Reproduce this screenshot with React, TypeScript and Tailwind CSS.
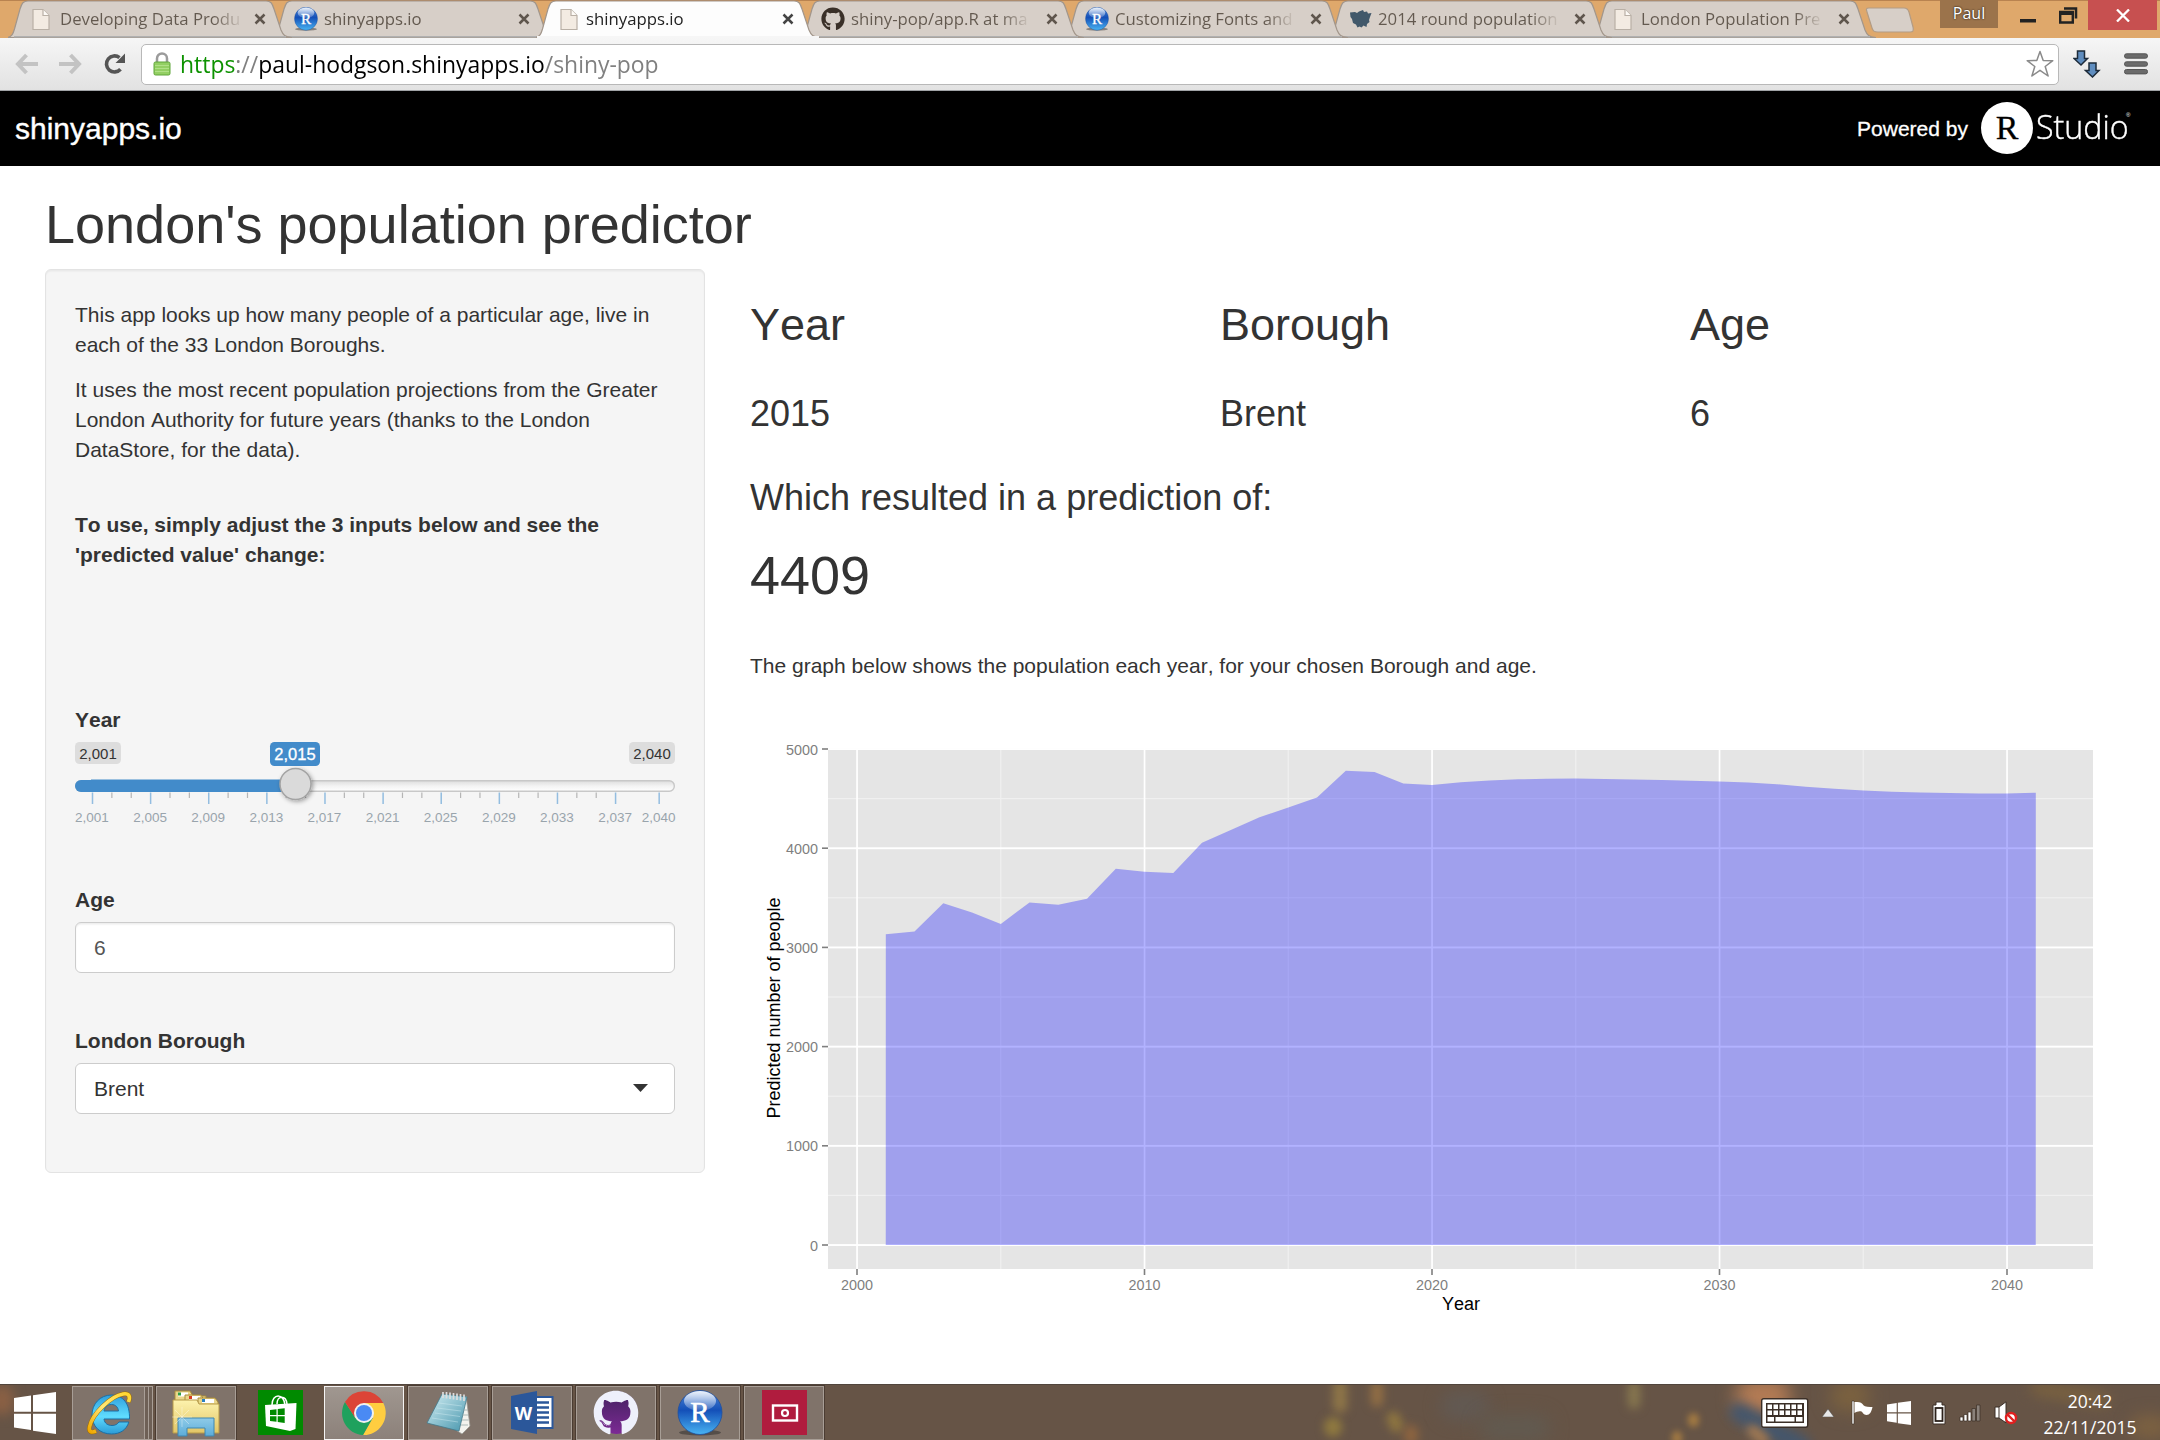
import React from "react";
import { FaGithub } from "react-icons/fa";

const SEGOE = "font-['Open_Sans','Noto_Sans',sans-serif]";

function DocIcon() {
  return (
    <svg width="18" height="23" viewBox="0 0 18 23" className="shrink-0">
      <path d="M1 1.5h10l6 6v14H1z" fill="#f3ebe2" stroke="#b9b0a6" strokeWidth="1.2" />
      <path d="M11 1.5v6h6" fill="#fdfaf6" stroke="#b9b0a6" strokeWidth="1.2" />
    </svg>
  );
}

function ROrb({ size, id }: { size: number; id: string }) {
  return (
    <svg width={size} height={size} viewBox="0 0 46 46" className="shrink-0">
      <defs>
        <linearGradient id={id} x1="0" y1="0" x2="0" y2="1">
          <stop offset="0" stopColor="#4f86d6" />
          <stop offset="0.45" stopColor="#1450b8" />
          <stop offset="1" stopColor="#49b4f2" />
        </linearGradient>
        <linearGradient id={id + "g"} x1="0" y1="0" x2="0" y2="1">
          <stop offset="0" stopColor="#fff" stopOpacity="0.9" />
          <stop offset="1" stopColor="#fff" stopOpacity="0.12" />
        </linearGradient>
      </defs>
      <ellipse cx="23" cy="42.5" rx="21" ry="3" fill="#222" opacity="0.45" />
      <circle cx="23" cy="22.5" r="22" fill={"url(#" + id + ")"} stroke="#1e4f9f" strokeWidth="0.8" />
      <ellipse cx="23" cy="11" rx="16" ry="10" fill={"url(#" + id + "g)"} />
      <text x="23" y="32" textAnchor="middle" fill="#fff" className="font-['Liberation_Serif',serif] text-[29px]" stroke="#fff" strokeWidth="0.6">R</text>
    </svg>
  );
}

function MapIcon() {
  return (
    <svg width="22" height="18" viewBox="0 0 22 18" className="shrink-0">
      <path d="M0 2.500l5-.5 2 1 2-1.500L13 0l1 2 3-.5 1 2 3.500-.5-1.500 4-1 3 .5 2-2.500 2-.5 3-3-1.500-2 2-2-1-2 1-1.500-3L3 13 2 9 .5 7z" fill="#41586a" />
    </svg>
  );
}

type Tab = { title: string; icon: React.ReactNode; active?: boolean; iconBox: string; z: string };

const tabs: Tab[] = [
  { title: "Developing Data Produ", icon: <DocIcon />, iconBox: "ml-[24px] w-[28px]", z: "z-[7]" },
  { title: "shinyapps.io", icon: <ROrb size={24} id="t2" />, iconBox: "ml-[22px] w-[30px]", z: "z-[6]" },
  { title: "shinyapps.io", icon: <DocIcon />, active: true, iconBox: "ml-[24px] w-[26px]", z: "z-[9]" },
  { title: "shiny-pop/app.R at ma", icon: <FaGithub size={24} color="#3a3028" />, iconBox: "ml-[21px] w-[30px]", z: "z-[5]" },
  { title: "Customizing Fonts and", icon: <ROrb size={24} id="t5" />, iconBox: "ml-[21px] w-[30px]", z: "z-[4]" },
  { title: "2014 round population", icon: <MapIcon />, iconBox: "ml-[22px] w-[28px]", z: "z-[3]" },
  { title: "London Population Pre", icon: <DocIcon />, iconBox: "ml-[22px] w-[27px]", z: "z-[2]" },
];

function TabShape({ active }: { active?: boolean }) {
  return (
    <svg width="284" height="38" viewBox="0 0 284 38" className="absolute left-0 top-0 -z-10">
      <path
        d="M0 37.5C4 36 5 34 6.500 29L12 9C14 3 15 1 20 1H258C263 1 264 3 266 9L273 30C275 35 277 37 284 37.500Z"
        fill={active ? "#fdfdfd" : "#d7cfc8"}
        stroke="#a2968b"
        strokeWidth="1.2"
      />
      {active ? <rect x="1" y="36" width="282" height="2" fill="#f6f6f6" /> : <rect x="6" y="36" width="272" height="1.500" fill="#b0b0b0" />}
    </svg>
  );
}

function TabStrip() {
  return (
    <div className="flex h-[38px] items-start border-t border-[#b98350] bg-[#dfa86b] pl-[8px]">
      {tabs.map((t, i) => (
        <div key={i} className={`relative isolate -mr-[20px] -mt-px flex h-[38px] w-[284px] shrink-0 items-center ${t.z}`}>
          <TabShape active={t.active} />
          <div className={`flex shrink-0 items-center ${t.iconBox}`}>{t.icon}</div>
          <div
            className={`flex-1 whitespace-nowrap text-[17px] leading-[24px] ${SEGOE} ${t.active ? "text-[#222]" : "text-[#63594f]"}`}
          >
            <span className={`inline-block origin-left scale-x-[0.985] ${t.title.length > 12 ? "bg-linear-to-r from-[#63594f] from-85% to-[#c9c0b8] bg-clip-text text-transparent" : ""}`}>{t.title}</span>
          </div>
          <svg width="12" height="12" viewBox="0 0 12 12" className="mr-[26px] shrink-0">
            <path d="M1.500 1.500l9 9M10.500 1.500l-9 9" stroke={t.active ? "#444" : "#5f564d"} strokeWidth="2.500" />
          </svg>
        </div>
      ))}
      <svg width="50" height="27" viewBox="0 0 50 27" className="ml-[9px] mt-[6px] shrink-0">
        <path d="M4 1h35c3 0 4 1 5 4l4 15c1 4 0 5-3 5H13c-4 0-5-1-6-4L2 5C1 2 1 1 4 1z" fill="#d7cfc8" stroke="#b39c84" strokeWidth="1.200" />
      </svg>
      <div className={`-mt-px ml-[25px] h-[28px] w-[58px] shrink-0 bg-[#9b734b] text-center text-[16px] leading-[27px] text-white [text-shadow:0_0_2px_#000] ${SEGOE}`}>
        Paul
      </div>
      <svg width="60" height="30" viewBox="0 0 60 30" className="ml-[21px] shrink-0">
        <rect x="1" y="18" width="16" height="3.500" fill="#222" />
        <path d="M45 7.500h12v10" fill="none" stroke="#222" strokeWidth="2.500" />
        <path d="M41.200 11h12.600v10.500H41.200z" fill="none" stroke="#222" strokeWidth="2.400" />
        <rect x="40" y="10" width="15" height="4" fill="#222" />
      </svg>
      <div className="-mt-px ml-[9px] flex h-[30px] w-[69px] shrink-0 items-center justify-center bg-[#c75050]">
        <svg width="14" height="13" viewBox="0 0 14 13">
          <path d="M1 .5l12 12M13 .5l-12 12" stroke="#fff" strokeWidth="2.300" />
        </svg>
      </div>
    </div>
  );
}

function Toolbar() {
  return (
    <div className="flex h-[53px] items-center border-b border-[#a0a3a6] bg-gradient-to-b from-[#f6f6f6] to-[#e2e2e2] pl-[15px]">
      <svg width="24" height="22" viewBox="0 0 24 22">
        <path d="M11.500 2L3 11l8.500 9M3.500 11H23" fill="none" stroke="#c3c3c3" strokeWidth="4" />
      </svg>
      <svg width="24" height="22" viewBox="0 0 24 22" className="ml-[19px]">
        <path d="M12.500 2L21 11l-8.500 9M20.500 11H1" fill="none" stroke="#c3c3c3" strokeWidth="4" />
      </svg>
      <svg width="23" height="22" viewBox="0 0 23 22" className="ml-[21px]">
        <path d="M17.500 16.200a8 8 0 1 1-1-11.500" fill="none" stroke="#555" strokeWidth="3.600" />
        <path d="M22 .5V10h-9.500z" fill="#555" />
      </svg>
      <div className="ml-[15px] flex h-[41px] w-[1918px] shrink-0 items-center rounded-[5px] border border-[#b8b8b8] bg-white pl-[11px]">
        <svg width="18" height="24" viewBox="0 0 18 24" className="shrink-0">
          <path d="M4 11V6.500a5 5 0 0 1 10 0V11" fill="none" stroke="#9b9b9b" strokeWidth="2.500" />
          <rect x="1" y="10" width="16" height="13" rx="1.500" fill="#93cf63" stroke="#5fa53a" />
          <path d="M2 13.500h14M2 16.500h14M2 19.500h14" stroke="#b0e087" strokeWidth="1" />
        </svg>
        <div className={`ml-[9px] flex-1 whitespace-nowrap text-[23.5px] leading-[36px] text-[#808080] ${SEGOE}`}>
          <span className="-mt-[2px] inline-block origin-left scale-x-[0.975]">
            <span className="text-[#0d9200]">https</span>://<span className="text-black">paul-hodgson.shinyapps.io</span>/shiny-pop
          </span>
        </div>
        <svg width="28" height="28" viewBox="0 0 28 28" className="mr-[4px] shrink-0">
          <path d="M14 1.500l3.200 9 9.600.2-7.600 5.800 2.900 9.500-8.100-5.700-8.100 5.700 2.900-9.500L1.200 10.700l9.600-.2z" fill="#fff" stroke="#8a8a8a" strokeWidth="1.500" strokeLinejoin="round" />
        </svg>
      </div>
      <svg width="30" height="28" viewBox="0 0 30 28" className="ml-[14px]">
        <path d="M4.500 1h7v7.500h3L8 15 1 8.500h3.500z" fill="#5f8dbf" stroke="#1d2b3a" strokeWidth="1.500" />
        <path d="M16 13h7v7.500h3L19.500 27 12.500 20.500H16z" fill="#5f8dbf" stroke="#1d2b3a" strokeWidth="1.500" />
      </svg>
      <svg width="24" height="22" viewBox="0 0 24 22" className="ml-[21px]">
        <rect x=".5" y=".8" width="23" height="4.400" rx="2" fill="#6b6b6b" stroke="#555" />
        <rect x=".5" y="8.800" width="23" height="4.400" rx="2" fill="#6b6b6b" stroke="#555" />
        <rect x=".5" y="16.500" width="23" height="4.400" rx="2" fill="#6b6b6b" stroke="#555" />
      </svg>
    </div>
  );
}

function BrandBar() {
  return (
    <div className="flex h-[75px] items-center justify-between bg-black pl-[15px] pr-[31px] text-white">
      <span className="text-[30px] leading-[40px] [-webkit-text-stroke:0.4px_#fff]">shinyapps.io</span>
      <div className="flex items-center">
        <span className="mt-[1px] text-[21px] leading-[30px] [-webkit-text-stroke:0.3px_#fff]">Powered by</span>
        <div className="ml-[13px] mt-[-2px] flex size-[52px] items-center justify-center rounded-full bg-white">
          <span className="font-['Liberation_Serif',serif] text-[34px] leading-[52px] text-black [-webkit-text-stroke:0.3px_#000]">R</span>
        </div>
        <span className="ml-[3px] mt-[-4px] w-[90px] whitespace-nowrap font-['Open_Sans',sans-serif] text-[33px] font-light leading-[50px]">
          <span className="inline-block origin-left scale-x-[0.975] [-webkit-text-stroke:0.4px_#fff]">Studio</span>
        </span>
        <span className="-mt-[28px] w-[3px] text-[6px]">®</span>
      </div>
    </div>
  );
}

const TICK_LABELS = [2001, 2005, 2009, 2013, 2017, 2021, 2025, 2029, 2033, 2037, 2040];
const MINOR_TICKS = Array.from({ length: 9 }, (_, i) => [2001 + i * 4 + 4 / 3, 2001 + i * 4 + 8 / 3]).flat();

function YearSlider() {
  const x = (y: number) => 17.5 + (y - 2001) * 14.53;
  return (
    <svg width="604" height="90" viewBox="-2 0 604 90" className="-ml-[2px] block overflow-visible">
      <defs>
        <linearGradient id="track" x1="0" y1="0" x2="0" y2="1">
          <stop offset="0" stopColor="#dddddd" />
          <stop offset="0.5" stopColor="#f3f3f3" />
          <stop offset="1" stopColor="#ffffff" />
        </linearGradient>
        <filter id="knob" x="-50%" y="-50%" width="200%" height="200%">
          <feDropShadow dx="1.500" dy="1.500" stdDeviation="2" floodOpacity="0.35" />
        </filter>
      </defs>
      <rect x="0" y="0" width="46" height="22" rx="4.500" fill="#dddddd" />
      <text x="23" y="16.500" textAnchor="middle" fill="#333" className="text-[15px]">2,001</text>
      <rect x="554" y="0" width="46" height="22" rx="4.500" fill="#dddddd" />
      <text x="577" y="16.500" textAnchor="middle" fill="#333" className="text-[15px]">2,040</text>
      <rect x="195" y="0" width="50" height="24" rx="4.500" fill="#428bca" />
      <text x="220" y="18" textAnchor="middle" fill="#fff" stroke="#fff" strokeWidth="0.3" className="text-[16.5px]">2,015</text>
      <rect x="0.700" y="38.700" width="598.600" height="10.600" rx="5" fill="url(#track)" stroke="#c8c8c8" strokeWidth="1.400" />
      <rect x="0" y="38" width="30" height="12" rx="6" fill="#428bca" />
      <rect x="16" y="37.500" width="204" height="12.500" fill="#428bca" />
      {TICK_LABELS.map((y) => (
        <rect key={y} x={x(y) - 0.75} y="50.500" width="1.500" height="11.500" fill="#93bde0" />
      ))}
      {MINOR_TICKS.map((y) => (
        <rect key={y} x={x(y) - 0.6} y="50.500" width="1.200" height="5.500" fill="#b5b5b5" />
      ))}
      <circle cx="220.500" cy="42" r="15.500" fill="#dadada" stroke="#a3a3a3" strokeWidth="1.500" filter="url(#knob)" />
      {TICK_LABELS.map((y) => (
        <text key={y} x={x(y) - 0.5} y="79.500" textAnchor="middle" fill="#99a4ac" className="text-[13.5px]">
          {y.toLocaleString("en-US")}
        </text>
      ))}
    </svg>
  );
}

function Sidebar() {
  return (
    <div className="h-[904px] w-[660px] rounded-[6px] border-[1.5px] border-[#e3e3e3] bg-[#f5f5f5] px-[29px] pt-[30px] shadow-[inset_0_1.5px_1.5px_rgba(0,0,0,0.05)]">
      <p className="whitespace-nowrap">This app looks up how many people of a particular age, live in<br />each of the 33 London Boroughs.</p>
      <p className="mt-[15px] whitespace-nowrap">It uses the most recent population projections from the Greater<br />London Authority for future years (thanks to the London<br />DataStore, for the data).</p>
      <p className="mt-[45px] whitespace-nowrap font-bold">To use, simply adjust the 3 inputs below and see the<br />'predicted value' change:</p>
      <div className="mt-[135px]">
        <div className="font-bold">Year</div>
        <div className="mt-[7px]"><YearSlider /></div>
      </div>
      <div className="mt-[53px]">
        <div className="font-bold">Age</div>
        <div className="mt-[7px] flex h-[51px] items-center rounded-[6px] border-[1.5px] border-[#ccc] bg-white pl-[18px] text-[#555] shadow-[inset_0_1.5px_1.5px_rgba(0,0,0,0.075)]">6</div>
      </div>
      <div className="mt-[53px]">
        <div className="font-bold">London Borough</div>
        <div className="mt-[7px] flex h-[51px] items-center justify-between rounded-[6px] border-[1.5px] border-[#ccc] bg-white pl-[18px] pr-[26px]">
          Brent
          <svg width="15" height="8" viewBox="0 0 15 8" className="-mt-[2px]"><path d="M0 0h15L7.500 8z" fill="#333" /></svg>
        </div>
      </div>
    </div>
  );
}

const POP = [
  3133, 3160, 3445, 3353, 3237, 3453, 3430, 3491, 3792, 3762, 3750, 4055, 4182, 4313, 4409, 4510, 4780, 4769, 4653, 4637,
  4664, 4683, 4695, 4701, 4702, 4699, 4693, 4687, 4680, 4671, 4661, 4645, 4620, 4600, 4583, 4570, 4561, 4555, 4551, 4550, 4559,
];

function Chart() {
  const px = (year: number) => 107 + (year - 2000) * 28.75;
  const py = (v: number) => 525 - v * 0.0992;
  const area = POP.map((v, i) => `${px(2001 + i).toFixed(1)},${py(v).toFixed(1)}`).join(" ");
  const majorY = [0, 1000, 2000, 3000, 4000, 5000];
  const majorX = [2000, 2010, 2020, 2030, 2040];
  return (
    <svg width="1380" height="610" viewBox="0 0 1380 610" className="block">
      <rect x="78" y="28.500" width="1265" height="520.500" fill="#e5e5e5" />
      {[500, 1500, 2500, 3500, 4500].map((v) => (
        <rect key={v} x="78" y={py(v) - 0.6} width="1265" height="1.200" fill="#f0f0f0" />
      ))}
      {[2005, 2015, 2025, 2035].map((v) => (
        <rect key={v} x={px(v) - 0.6} y="28.500" width="1.200" height="520.500" fill="#f0f0f0" />
      ))}
      {majorY.map((v) => (
        <rect key={v} x="78" y={py(v) - 0.9} width="1265" height="1.900" fill="#fff" />
      ))}
      {majorX.map((v) => (
        <rect key={v} x={px(v) - 0.8} y="28.500" width="1.700" height="520.500" fill="#fff" />
      ))}
      <polygon points={`${px(2001)},525 ${area} ${px(2041)},525`} fill="#0000ff" fillOpacity="0.3" />
      {majorY.map((v) => (
        <g key={v}>
          <rect x="72" y={py(v) - 0.8} width="6" height="1.600" fill="#7f7f7f" />
          <text x="68" y={py(v) + 5.5} textAnchor="end" fill="#7f7f7f" className="text-[14.4px]">{v}</text>
        </g>
      ))}
      {majorX.map((v) => (
        <g key={v}>
          <rect x={px(v) - 0.8} y="549" width="1.600" height="6" fill="#7f7f7f" />
          <text x={px(v)} y="570" textAnchor="middle" fill="#7f7f7f" className="text-[14.4px]">{v}</text>
        </g>
      ))}
      <text x="711" y="589.500" textAnchor="middle" fill="#000" className="text-[18px]">Year</text>
      <text transform="translate(30 288) rotate(-90)" textAnchor="middle" fill="#000" className="text-[18px]">Predicted number of people</text>
    </svg>
  );
}

function Results() {
  return (
    <div className="ml-[45px] w-[1410px] pt-[31px]">
      <div className="grid grid-cols-3 text-[45px] leading-[50px]">
        <div>Year</div><div>Borough</div><div>Age</div>
      </div>
      <div className="mt-[44px] grid grid-cols-3 text-[36px] leading-[40px]">
        <div>2015</div><div>Brent</div><div>6</div>
      </div>
      <div className="mt-[44px] text-[36px] leading-[40px]">Which resulted in a prediction of:</div>
      <div className="mt-[27px] text-[54px] leading-[60px]">4409</div>
      <p className="mt-[46px]">The graph below shows the population each year, for your chosen Borough and age.</p>
      <div className="mt-[39px]"><Chart /></div>
    </div>
  );
}

function WinLogo({ w, h }: { w: number; h: number }) {
  return (
    <svg width={w} height={h} viewBox="0 0 42 42" preserveAspectRatio="none" className="shrink-0">
      <path d="M0 6L17 3.500V19.800H0zM19 3.200L42 0v19.800H19zM0 21.800h17V38L0 35.500zM19 21.800h23V42l-23-3.200z" fill="#fff" />
    </svg>
  );
}

function IEIcon() {
  return (
    <svg width="48" height="48" viewBox="0 0 48 48">
      <defs>
        <linearGradient id="ie" x1="0" y1="0" x2="0" y2="1">
          <stop offset="0" stopColor="#2f9fdc" />
          <stop offset="0.550" stopColor="#5fdcff" />
          <stop offset="1" stopColor="#2b9bd6" />
        </linearGradient>
        <linearGradient id="iering" x1="1" y1="0" x2="0" y2="1">
          <stop offset="0" stopColor="#ffd52e" />
          <stop offset="0.500" stopColor="#ffe876" />
          <stop offset="1" stopColor="#f0a800" />
        </linearGradient>
      </defs>
      <path d="M44.500 30H19c.5 4.500 4 6.500 8 6.500 3.500 0 5.500-1.500 7-3.500h9.800C41.500 41 35 45 26.500 45 14.500 45 7 37 7 26S15 6 26.500 6c11.500 0 18.500 8.500 18 24zM19 22h14.500c-.5-4-3-6.500-7-6.500-4 0-7 2.500-7.500 6.500z" fill="url(#ie)" stroke="#1c6fa5" />
      <path d="M43.500 13c2-5.500 1-9-5.500-8C26 7 7 25 4.500 38c-1 5 2 6 6.500 4" fill="none" stroke="#9a6a05" strokeWidth="4.600" />
      <path d="M43.500 13c2-5.500 1-9-5.500-8C26 7 7 25 4.500 38c-1 5 2 6 6.500 4" fill="none" stroke="url(#iering)" strokeWidth="3.600" />
    </svg>
  );
}

function FolderIcon() {
  return (
    <svg width="50" height="48" viewBox="0 0 50 48">
      <defs>
        <linearGradient id="fold" x1="0" y1="0" x2="0" y2="1">
          <stop offset="0" stopColor="#fdf3ae" />
          <stop offset="1" stopColor="#e2c566" />
        </linearGradient>
        <linearGradient id="stand" x1="0" y1="0" x2="0" y2="1">
          <stop offset="0" stopColor="#8fcbe8" />
          <stop offset="1" stopColor="#5cacd8" />
        </linearGradient>
      </defs>
      <path d="M4 2h15l3 5h13v8H4z" fill="#ead68a" stroke="#a88b3c" />
      <rect x="7" y="3.500" width="10" height="4" fill="#fff" /><rect x="7" y="3.500" width="3" height="3" fill="#2f9e44" />
      <path d="M14 6h16l3 5h12v8H14z" fill="#ead68a" stroke="#a88b3c" />
      <rect x="18" y="7" width="11" height="4" fill="#fff" /><rect x="18" y="7" width="3" height="3" fill="#d83b20" />
      <path d="M27 9h17l3 4v10H27z" fill="#ead68a" stroke="#a88b3c" />
      <rect x="31" y="10" width="12" height="4" fill="#fff" /><rect x="31" y="10" width="3" height="3" fill="#2a7fc0" />
      <path d="M2 11h24l2 4h20v29H2z" fill="url(#fold)" stroke="#b79a48" />
      <path d="M7 29h36v18h-9v-8H16v8H7z" fill="url(#stand)" stroke="#3f86b0" />
      <path d="M11 18v20M1 28h20M4 21l14 14M18 21L4 35" stroke="#fff" strokeOpacity="0.450" strokeWidth="0.800" />
    </svg>
  );
}

function StoreIcon() {
  return (
    <svg width="45" height="45" viewBox="0 0 45 45">
      <rect width="45" height="45" fill="#008a00" />
      <path d="M14 15c0-12 12-12 13 0M19 14c0-9 9-9 10 0" fill="none" stroke="#fff" strokeWidth="1.500" />
      <path d="M7 15l31.500-2-1 26L32 41 8 36z" fill="#fff" />
      <path d="M12 20l6.500-.7V25H12zM19.700 19l7-.8V25h-7zM12 26.200h6.500v5.600L12 31zM19.700 26.200h7V33l-7-1z" fill="#008a00" />
    </svg>
  );
}

function ChromeIcon() {
  return (
    <svg width="44" height="44" viewBox="0 0 44 44">
      <path d="M22 12H41.300A22 22 0 0 1 21 44L30.700 27z" fill="#ffcd40" />
      <path d="M3 11A22 22 0 0 0 21 44l9.700-17L13.300 27z" fill="#1fa15d" />
      <path d="M3 11A22 22 0 0 1 41.300 12H22L13.300 27z" fill="#dc4437" />
      <circle cx="22" cy="22" r="10" fill="#f1f1f1" />
      <circle cx="22" cy="22" r="8" fill="#4a8af4" />
    </svg>
  );
}

function NotepadIcon() {
  return (
    <svg width="46" height="46" viewBox="0 0 46 46">
      <defs>
        <linearGradient id="note" x1="0" y1="0" x2="1" y2="1">
          <stop offset="0" stopColor="#d3eef3" />
          <stop offset="1" stopColor="#4796ad" />
        </linearGradient>
      </defs>
      <path d="M41 6l4 30-8 8-6-4z" fill="#f3f3ee" stroke="#9b9b94" strokeWidth="0.800" />
      <path d="M17 4l25 3-8 34L2 33z" fill="url(#note)" stroke="#42788a" strokeWidth="0.800" />
      <path d="M14 13l23 3M12 18l24 3M10 23l25 3.500M7 28l26 4" stroke="#d6eff4" strokeOpacity="0.500" strokeWidth="0.800" />
      <path d="M18 2v6M21.500 2v6.500M25 2.500V9M28.500 3v6.500M32 3.500V10M35.500 4v6.500M39 4.500V11" stroke="#dcdcdc" strokeWidth="1.700" />
      <path d="M38.500 20h4M37.500 25h6M37 30h6.500M36 35h7" stroke="#9aa" strokeWidth="0.800" />
    </svg>
  );
}

function WordIcon() {
  return (
    <svg width="43" height="43" viewBox="0 0 43 43">
      <path d="M24 6h17.500v31H24z" fill="#fff" stroke="#2b579a" strokeWidth="2" />
      <path d="M26 11.500h12M26 16.500h12M26 21.500h12M26 26.500h12M26 31.500h12" stroke="#2b579a" strokeWidth="2.400" />
      <path d="M0 5L26 0v43L0 38z" fill="#2b579a" />
      <text x="12.500" y="28.500" textAnchor="middle" fill="#fff" className="font-['Open_Sans',sans-serif] text-[18px] font-bold">W</text>
    </svg>
  );
}

function OctoIcon() {
  return (
    <div className="relative flex size-[43px] items-center justify-center rounded-full bg-gradient-to-b from-[#43205f] to-[#7c2a94]">
      <FaGithub size={46} color="#eef0fb" className="absolute" />
    </div>
  );
}

function CaptureIcon() {
  return (
    <svg width="45" height="45" viewBox="0 0 45 45">
      <rect width="45" height="45" fill="#b01c3e" />
      <rect x="11" y="15.500" width="24" height="15" fill="none" stroke="#fff" strokeWidth="2.400" />
      <circle cx="23" cy="23" r="3" fill="none" stroke="#fff" strokeWidth="2.200" />
    </svg>
  );
}

function TaskButton({ children, plain, active }: { children: React.ReactNode; plain?: boolean; active?: boolean }) {
  const look = active
    ? "border-[1.5px] border-white/90 bg-gradient-to-b from-[#a09790] to-[#8c817a]"
    : plain
      ? ""
      : "border border-[#a89e96] bg-[#80736a] outline outline-[#4b3c32]";
  return <div className={`mr-[4px] flex h-[54px] w-[80px] shrink-0 items-center justify-center ${look}`}>{children}</div>;
}

function TrayIcons() {
  return (
    <div className="flex items-center">
      <svg width="48" height="30" viewBox="0 0 48 30">
        <rect x=".7" y=".7" width="46" height="28.600" rx="2" fill="#fff" stroke="#3b2f27" strokeWidth="1.400" />
        <rect x="5" y="5" width="38" height="20" fill="#3b2f27" />
        {[0, 1, 2, 3, 4, 5].map((i) => (
          <g key={i} fill="#fff">
            <rect x={6.5 + i * 6} y="6.500" width="4.500" height="4.500" />
            <rect x={6.5 + i * 6} y="12.500" width="4.500" height="4.500" />
          </g>
        ))}
        <path d="M6.500 19h6.500v4.500H6.500zM14.500 19h19v4.500h-19zM35 19h6.500v4.500H35z" fill="#fff" />
      </svg>
      <svg width="12" height="8" viewBox="0 0 12 8" className="ml-[13px]"><path d="M0 8L6 0l6 8z" fill="#e8e8e8" stroke="#444" strokeWidth="0.500" /></svg>
      <svg width="24" height="25" viewBox="0 0 24 25" className="ml-[17px]">
        <path d="M1 1h2v23H1z" fill="#fff" stroke="#3b2f27" strokeWidth="0.600" />
        <path d="M3.500 2c4 0 6 0 8 2 1 2 4 3.500 10 3-1 5-3 8-6 8s-4-3-5-3.500c-2-.8-5 0-7 1.500z" fill="#fff" />
      </svg>
      <div className="ml-[12px]"><WinLogo w={24} h={24} /></div>
      <svg width="16" height="24" viewBox="0 0 16 24" className="ml-[20px]">
        <path d="M5 1h6v3h3v19H2V4h3z" fill="#fff" stroke="#3b2f27" />
        <rect x="4.500" y="7" width="7" height="13" fill="#fff" stroke="#2b211b" strokeWidth="1.800" />
      </svg>
      <svg width="22" height="18" viewBox="0 0 22 18" className="ml-[12px]">
        <path d="M1 13h3v4H1zM5 10.500h3V17H5zM9 8h3v9H9z" fill="#fff" stroke="#3b2f27" strokeWidth="0.700" />
        <path d="M13 4.500h3.500V17H13zM17.500 1H21v16h-3.500z" fill="#8a817a" stroke="#3b2f27" strokeWidth="0.700" />
      </svg>
      <svg width="24" height="24" viewBox="0 0 24 24" className="ml-[13px]">
        <path d="M1 6h4L12 .8v21L5 17H1z" fill="#fff" stroke="#3b2f27" />
        <path d="M5 6v11" stroke="#3b2f27" />
        <circle cx="17" cy="17" r="5" fill="#fff" stroke="#e02020" strokeWidth="2.400" />
        <path d="M13.500 13.500l7 7" stroke="#e02020" strokeWidth="2.400" />
      </svg>
    </div>
  );
}

const LIGHTS = [
  "left-[1333px] top-[-6px] h-[34px] w-[14px] bg-[#8f7648] blur-[5px]",
  "left-[1371px] top-[-4px] h-[26px] w-[12px] bg-[#947044] blur-[5px]",
  "left-[1324px] top-[32px] h-[20px] w-[18px] bg-[#8f793f] blur-[4px]",
  "left-[1388px] top-[26px] h-[22px] w-[14px] rotate-[-25deg] bg-[#8d7440] blur-[4px]",
  "left-[1404px] top-[40px] h-[20px] w-[14px] bg-[#8f653f] blur-[5px]",
  "left-[1440px] top-[6px] h-[30px] w-[50px] bg-[#625952] blur-[8px]",
  "left-[1480px] top-[30px] h-[26px] w-[70px] bg-[#615a50] blur-[9px]",
  "left-[1628px] top-[-4px] h-[28px] w-[12px] bg-[#88784f] blur-[5px]",
  "left-[1688px] top-[28px] h-[14px] w-[11px] bg-[#a37a42] blur-[3px]",
  "left-[1672px] top-[46px] h-[14px] w-[10px] bg-[#a37a42] blur-[3px]",
  "left-[1735px] top-[-8px] h-[40px] w-[56px] bg-[#b37b54] blur-[9px]",
  "left-[1725px] top-[34px] h-[20px] w-[90px] rotate-[28deg] bg-[#44566c] blur-[6px]",
  "left-[1745px] top-[44px] h-[12px] w-[26px] rotate-[40deg] bg-[#a07852] blur-[4px]",
  "left-[1830px] top-[-4px] h-[30px] w-[40px] bg-[#7c623f] blur-[9px]",
  "left-[2030px] top-[2px] h-[14px] w-[80px] rotate-[10deg] bg-[#7b623f] blur-[7px]",
  "left-[2130px] top-[30px] h-[24px] w-[40px] bg-[#7c6141] blur-[8px]",
];

function Taskbar() {
  return (
    <div className="relative isolate flex h-[56px] items-center justify-between overflow-hidden border-t border-[#51453c] bg-[#665446]">
      <div className="absolute inset-0 -z-10">
        <div className="absolute left-[-10px] top-0 h-[30px] w-[24px] rounded-full bg-[#8a6044] blur-[6px]" />
        {LIGHTS.map((c, i) => (
          <div key={i} className={`absolute rounded-full ${c}`} />
        ))}
      </div>
      <div className="flex items-center">
        <div className="ml-[14px]"><WinLogo w={42} h={42} /></div>
        <div className="ml-[16px] flex">
          <div className="flex h-[54px] w-[73px] items-center justify-center border border-[#a89e96] bg-[#80736a]"><IEIcon /></div>
          <div className="h-[54px] w-[4px] border-y border-r border-[#a89e96] bg-[#6e6056]" />
          <div className="mr-[3px] h-[54px] w-[4px] border-y border-r border-[#a89e96] bg-[#6e6056]" />
        </div>
        <TaskButton><FolderIcon /></TaskButton>
        <TaskButton plain><StoreIcon /></TaskButton>
        <TaskButton active><ChromeIcon /></TaskButton>
        <TaskButton><NotepadIcon /></TaskButton>
        <TaskButton><WordIcon /></TaskButton>
        <TaskButton><OctoIcon /></TaskButton>
        <TaskButton><ROrb size={46} id="tb" /></TaskButton>
        <TaskButton><CaptureIcon /></TaskButton>
      </div>
      <div className="flex items-center">
        <TrayIcons />
        <div className={`ml-[22px] mr-[20px] mt-[2px] w-[100px] text-center text-[17.5px] leading-[26px] text-white ${SEGOE}`}>
          <div>20:42</div>
          <div className="whitespace-nowrap">22/11/2015</div>
        </div>
      </div>
    </div>
  );
}

export default function App() {
  return (
    <div className="flex h-[1440px] w-[2160px] flex-col overflow-hidden bg-white font-['Liberation_Sans',Arial,sans-serif] text-[21px] leading-[30px] text-[#333] [font-kerning:none]">
      <TabStrip />
      <Toolbar />
      <BrandBar />
      <main className="min-h-0 flex-1 pl-[45px] pt-[29px]">
        <h1 className="text-[54px] leading-[59px]">London's population predictor</h1>
        <div className="mt-[15px] flex items-start">
          <Sidebar />
          <Results />
        </div>
      </main>
      <Taskbar />
    </div>
  );
}
